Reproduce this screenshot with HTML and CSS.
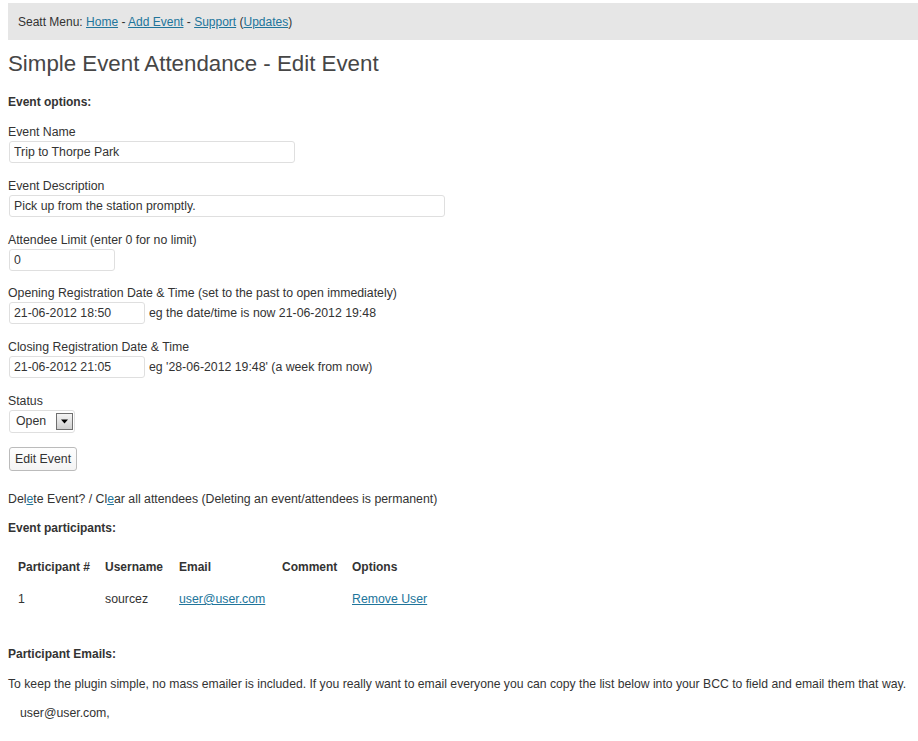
FILE: index.html
```html
<!DOCTYPE html>
<html>
<head>
<meta charset="utf-8">
<title>Simple Event Attendance - Edit Event</title>
<link rel="stylesheet" href="styles.css">
</head>
<body>
<div class="wrap">
  <div class="menubar">Seatt Menu: <a href="#">Home</a> - <a href="#">Add Event</a> - <a href="#">Support</a> (<a href="#">Updates</a>)</div>
  <h2 class="title">Simple Event Attendance - Edit Event</h2>

  <p class="heading">Event options:</p>

  <div class="field">
    <label class="label">Event Name</label>
    <input class="inp inp-name" type="text" value="Trip to Thorpe Park">
  </div>
  <div class="field">
    <label class="label">Event Description</label>
    <input class="inp inp-desc" type="text" value="Pick up from the station promptly.">
  </div>
  <div class="field">
    <label class="label">Attendee Limit (enter 0 for no limit)</label>
    <input class="inp inp-limit" type="text" value="0">
  </div>
  <div class="field">
    <label class="label">Opening Registration Date &amp; Time (set to the past to open immediately)</label>
    <div class="row"><input class="inp inp-date" type="text" value="21-06-2012 18:50"> <span class="hint">eg the date/time is now 21-06-2012 19:48</span></div>
  </div>
  <div class="field">
    <label class="label">Closing Registration Date &amp; Time</label>
    <div class="row"><input class="inp inp-date" type="text" value="21-06-2012 21:05"> <span class="hint">eg '28-06-2012 19:48' (a week from now)</span></div>
  </div>
  <div class="field">
    <label class="label">Status</label>
    <div class="select">
      <span class="select-text">Open</span>
      <span class="select-arrow"><svg width="9" height="5" viewBox="0 0 9 5"><path d="M1 0.5h7L4.5 4.5z" fill="#000"/></svg></span>
    </div>
  </div>
  <div class="actions"><button class="btn" type="button">Edit Event</button></div>

  <p class="plain plain-delete">Del<a href="#">e</a>te Event? / Cl<a href="#">e</a>ar all attendees (Deleting an event/attendees is permanent)</p>

  <p class="heading">Event participants:</p>

  <table class="parts">
    <thead>
      <tr><th class="c1">Participant #</th><th class="c2">Username</th><th class="c3">Email</th><th class="c4">Comment</th><th class="c5">Options</th></tr>
    </thead>
    <tbody>
      <tr><td>1</td><td>sourcez</td><td><a href="#">user@user.com</a></td><td></td><td><a href="#">Remove User</a></td></tr>
    </tbody>
  </table>

  <p class="heading heading-emails">Participant Emails:</p>
  <p class="plain plain-info">To keep the plugin simple, no mass emailer is included. If you really want to email everyone you can copy the list below into your BCC to field and email them that way.</p>
  <p class="emails">user@user.com,</p>
</div>
</body>
</html>
```
FILE: styles.css
```css
html, body {
  margin: 0;
  padding: 0;
  background: #fff;
}
body {
  font-family: "Liberation Sans", Arial, sans-serif;
  font-size: 12.3px;
  line-height: 18px;
  color: #333;
}
a {
  color: #21759b;
  text-decoration: underline;
}
.wrap {
  padding: 3px 0 0 8px;
}
.menubar {
  height: 37px;
  line-height: 38px;
  background: #e6e6e6;
  padding-left: 10px;
  font-size: 12px;
}
.title {
  margin: 0;
  padding: 9px 15px 4px 0;
  font-size: 22.3px;
  line-height: 29px;
  font-weight: normal;
  color: #464646;
}
.heading {
  margin: 11px 0 0;
  font-weight: bold;
  font-size: 12px;
}
.field {
  margin-top: 12px;
}
.field + .field {
  margin-top: 13.8px;
}
.label {
  display: block;
}
.row {
  display: flex;
  align-items: center;
}
.hint {
  margin-left: 4px;
}
.inp {
  box-sizing: border-box;
  display: block;
  height: 22px;
  margin: 0 0 0 1px;
  padding: 0 4px;
  border: 1px solid #dfdfdf;
  border-radius: 3px;
  background: #fff;
  font-family: "Liberation Sans", Arial, sans-serif;
  font-size: 12.3px;
  color: #333;
}
.inp-name { width: 286px; }
.inp-desc { width: 436px; }
.inp-limit { width: 106px; }
.inp-date { width: 136px; }
.select {
  box-sizing: border-box;
  display: flex;
  align-items: center;
  justify-content: space-between;
  width: 66px;
  height: 23px;
  margin-left: 1px;
  padding: 0 1px 0 6px;
  border: 1px solid #dfdfdf;
  border-radius: 3px;
  background: #fff;
}
.select-text {
  font-size: 12.3px;
}
.select-arrow {
  box-sizing: border-box;
  display: flex;
  align-items: center;
  justify-content: center;
  width: 17px;
  height: 17px;
  border: 1px solid #6f6f6f;
  background: linear-gradient(#f4f4f4, #cfcfcf);
}
.actions {
  margin-top: 14px;
}
.btn {
  box-sizing: border-box;
  margin-left: 1px;
  height: 24px;
  padding: 0 5px;
  border: 1px solid #bbb;
  border-radius: 3px;
  background: linear-gradient(#fefefe, #f4f4f4);
  font-family: "Liberation Sans", Arial, sans-serif;
  font-size: 12.3px;
  color: #333;
}
.plain {
  margin: 0;
}
.plain-delete {
  margin-top: 19px;
}
.parts {
  margin-top: 14px;
  border-collapse: collapse;
}
.parts th, .parts td {
  padding: 7px 0 7px 10px;
  text-align: left;
  vertical-align: top;
  line-height: 18px;
}
.parts th {
  font-weight: bold;
  font-size: 12px;
}
.c1 { width: 77px; }
.c2 { width: 64px; }
.c3 { width: 93px; }
.c4 { width: 60px; }
.c5 { width: 90px; }
.heading-emails {
  margin-top: 30px;
}
.plain-info {
  margin-top: 12px;
  font-size: 12.2px;
}
.emails {
  margin: 11px 0 0;
  padding-left: 12px;
}
```
